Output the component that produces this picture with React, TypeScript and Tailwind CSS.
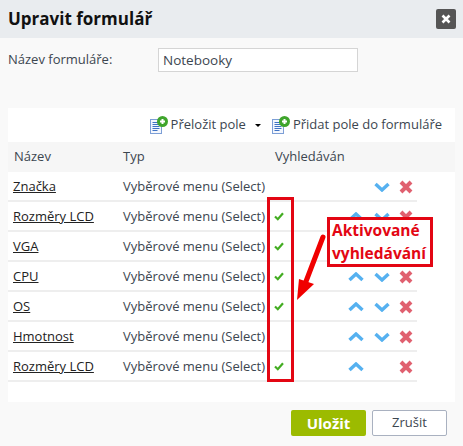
const font = { fontFamily: '"Open Sans", sans-serif' }

const rows = [
  { name: 'Značka', search: false, up: false, down: true },
  { name: 'Rozměry LCD', search: true, up: true, down: true },
  { name: 'VGA', search: true, up: true, down: true },
  { name: 'CPU', search: true, up: true, down: true },
  { name: 'OS', search: true, up: true, down: true },
  { name: 'Hmotnost', search: false, up: true, down: true },
  { name: 'Rozměry LCD', search: true, up: true, down: false },
]

function DocPlus() {
  return (
    <svg width="19" height="19" viewBox="0 0 19 19" className="shrink-0">
      <rect x="0.5" y="3.5" width="11" height="14" fill="#f4f7fd" stroke="#7d9fd6" />
      <path d="M2.5 6.5h7M2.5 8.5h7M2.5 10.5h7M2.5 12.5h7M2.5 14.5h5" stroke="#3f73c4" strokeWidth="1" />
      <circle cx="12.5" cy="5.5" r="5.5" fill="#3fa52c" />
      <path d="M12.5 3v5M10 5.5h5" stroke="#fff" strokeWidth="2" />
    </svg>
  )
}

function Check() {
  return (
    <svg width="10" height="9" viewBox="0 0 10 9" className="block">
      <path d="M1 4.5 3.8 7.2 9 1.2" fill="none" stroke="#43ad22" strokeWidth="2.2" />
    </svg>
  )
}

function Up() {
  return (
    <svg width="16" height="10" viewBox="0 0 16 10">
      <path d="M1.5 8 8 2l6.5 6" fill="none" stroke="#56b1f0" strokeWidth="3.4" />
    </svg>
  )
}

function Down() {
  return (
    <svg width="16" height="10" viewBox="0 0 16 10">
      <path d="M1.5 2 8 8l6.5-6" fill="none" stroke="#56b1f0" strokeWidth="3.4" />
    </svg>
  )
}

function Cross() {
  return (
    <svg width="14" height="14" viewBox="0 0 14 14">
      <path d="M2 2l10 10M12 2 2 12" fill="none" stroke="#e0606f" strokeWidth="4" />
    </svg>
  )
}

export default function App() {
  return (
    <div style={font} className="relative w-[463px] h-[446px] overflow-hidden bg-[#f9f9f9] text-[13px] text-[#3c4650]">
      <div className="h-[38px] bg-[#e9ecef] flex items-center justify-between pl-2 pr-[7px]">
        <h1 className="text-[17px] font-bold text-[#111]">Upravit formulář</h1>
        <button className="w-[20px] h-[20px] bg-[#555] rounded-[2px] flex items-center justify-center">
          <svg width="10" height="10" viewBox="0 0 10 10">
            <path d="M1.5 1.5l7 7M8.5 1.5l-7 7" stroke="#fff" strokeWidth="2.6" />
          </svg>
        </button>
      </div>

      <div className="flex items-center pl-2 mt-[10px]">
        <label className="w-[150px]">Název formuláře:</label>
        <div className="w-[200px] h-[24px] bg-white border border-[#d5d5d5] flex items-center px-[4px] text-[13.5px]">
          Notebooky
        </div>
      </div>

      <div className="mx-2 mt-[36px] h-[294px] bg-white">
        <div className="h-[34px] flex items-center justify-end pr-[13px]">
          <DocPlus />
          <span className="ml-[2px]">Přeložit pole</span>
          <span className="ml-[9px] mr-[11px] w-0 h-0 border-x-[3px] border-x-transparent border-t-[3px] border-t-black" />
          <DocPlus />
          <span className="ml-[2px]">Přidat pole do formuláře</span>
        </div>

        <div className="h-[30px] bg-[#f6f6f6] flex items-center">
          <span className="w-[115px] pl-[6px]">Název</span>
          <span className="w-[152px]">Typ</span>
          <span className="whitespace-nowrap">Vyhledáván</span>
        </div>

        <div className="w-[409px]">
          {rows.map((row, i) => (
            <div key={i} className="h-[30px] flex items-center border-b-2 border-[#eeeeee] pt-[1px]">
              <a className="w-[115px] pl-[5px] underline text-[#222]">{row.name}</a>
              <span className="w-[152px] whitespace-nowrap">Vyběrové menu (Select)</span>
              <span className="w-[69px] flex items-center -ml-px"><span className={row.search ? '' : 'invisible'}><Check /></span></span>
              <span className="w-[26px] flex justify-center">{row.up && <Up />}</span>
              <span className="w-[25px] flex justify-center">{row.down && <Down />}</span>
              <span className="w-[23px] flex justify-center"><Cross /></span>
            </div>
          ))}
        </div>
      </div>

      <div className="flex justify-end gap-[6px] pr-[16px] mt-[8px]">
        <button className="w-[75px] h-[26px] rounded-[2px] bg-[#9cbb00] text-white font-bold text-[15px]">Uložit</button>
        <button className="w-[75px] h-[26px] rounded-[2px] bg-white border border-[#a9b1c0]">Zrušit</button>
      </div>

      {/* annotation drawn over the table */}
      <div className="absolute left-[267px] top-[197px] w-[27px] h-[185px] border-[3px] border-[#e30613]" />
      <div className="absolute left-[327px] top-[217px] w-[106px] h-[50px] bg-white border-[3px] border-[#e30613] pl-[2px] flex flex-col justify-center text-[#e30613] font-bold text-[15.5px] leading-[23px]">
        <span>Aktivované</span>
        <span>vyhledávání</span>
      </div>
      <svg className="absolute left-[290px] top-[230px]" width="40" height="80" viewBox="0 0 40 80">
        <path d="M33 7 15 54" stroke="#f00000" strokeWidth="5" strokeLinecap="round" />
        <path d="M7 70 9 49 24 54Z" fill="#f00000" />
      </svg>
    </div>
  )
}
